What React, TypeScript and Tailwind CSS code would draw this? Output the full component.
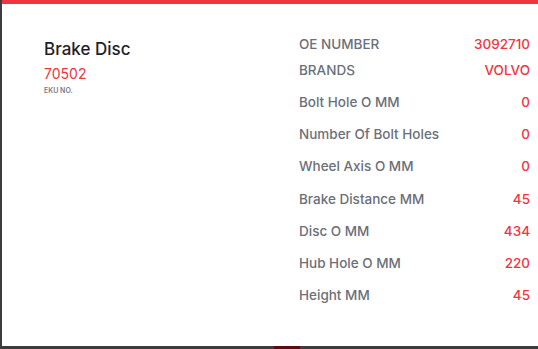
const specs = [
  { label: "Bolt Hole O MM", value: "0" },
  { label: "Number Of Bolt Holes", value: "0" },
  { label: "Wheel Axis O MM", value: "0" },
  { label: "Brake Distance MM", value: "45" },
  { label: "Disc O MM", value: "434" },
  { label: "Hub Hole O MM", value: "220" },
  { label: "Height MM", value: "45" },
];

const App = () => {
  return (
    <div className="w-[538px] h-[349px] bg-[#3d3d3d] flex flex-col font-['Inter',sans-serif] overflow-hidden">
      <div className="ml-[2px] h-[346px] bg-white flex flex-col">
        <div className="h-[4px] bg-[#f0353f]"></div>
        <div className="flex flex-1 pl-[42px] pr-[8px] pt-[33px]">
          <div className="w-[255px]">
            <h2 className="text-[17px] leading-[22px] font-medium text-[#1f2126] mt-[1px]">Brake Disc</h2>
            <p className="text-[14px] leading-[18px] text-[#f0353f] mt-[5px]">70502</p>
            <p className="text-[7px] leading-[10px] font-semibold text-[#7a7d84] mt-[3px]">EKU NO.</p>
          </div>
          <div className="flex-1 text-[13.5px] font-medium text-[#6b6f78] -mt-[6px]">
            <div className="flex justify-between h-[26px] items-center">
              <span>OE NUMBER</span>
              <span className="text-[#f0353f]">3092710</span>
            </div>
            <div className="flex justify-between h-[26px] items-center">
              <span>BRANDS</span>
              <span className="text-[#f0353f]">VOLVO</span>
            </div>
            <div className="mt-[3px]">
              {specs.map((s) => (
                <div key={s.label} className="flex justify-between h-[32.2px] items-center">
                  <span>{s.label}</span>
                  <span className="text-[#f0353f]">{s.value}</span>
                </div>
              ))}
            </div>
          </div>
        </div>
      </div>
      <div className="flex h-[3px] mt-auto">
        <div className="w-[274px]"></div>
        <div className="w-[26px] bg-[#5a0d0d]"></div>
      </div>
    </div>
  );
};

export default App;
